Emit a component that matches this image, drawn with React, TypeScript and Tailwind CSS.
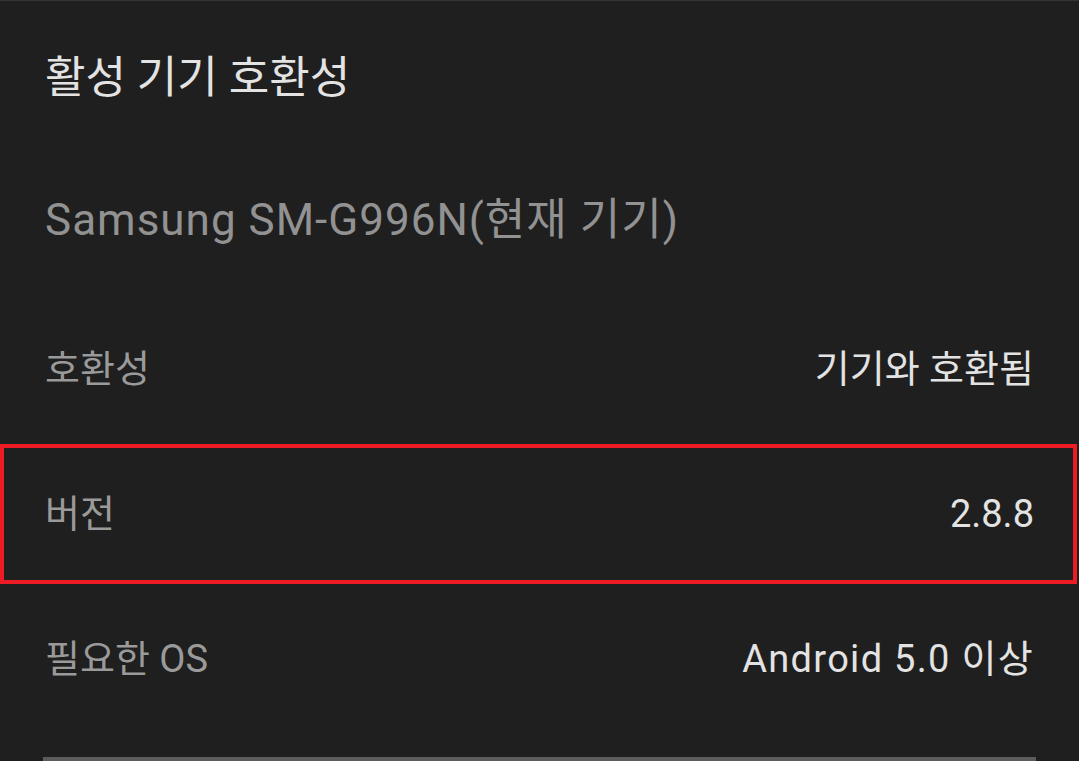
export default function App() {
  const rows = [
    { label: '호환성', value: '기기와 호환됨', track: '' },
    { label: '버전', value: '2.8.8', track: '', marked: true },
    { label: '필요한 OS', value: 'Android 5.0 이상', track: 'tracking-[1.3px]' },
  ];

  return (
    <div
      className="w-[1079px] h-[761px] overflow-hidden bg-[#1f1f1f] border-t border-[#343434]"
      style={{ fontFamily: 'Roboto, "Noto Sans CJK KR", sans-serif' }}
    >
      <div className="h-[154px] flex items-center px-[45px]">
        <h1 className="text-[44px] leading-none text-[#e3e3e3] font-normal">활성 기기 호환성</h1>
      </div>

      <div className="h-[130px] flex items-center px-[45px]">
        <p className="text-[44px] leading-none tracking-[1px] text-[#929292]">Samsung SM-G996N(현재 기기)</p>
      </div>

      <div className="mt-[11px]">
        {rows.map((row) => (
          <div key={row.label} className="relative h-[145px] flex items-center justify-between px-[45px]">
            <span className="text-[38px] leading-none text-[#9a9a9a]">{row.label}</span>
            <span className={`text-[38px] leading-none text-[#e3e3e3] ${row.track}`}>{row.value}</span>
            {row.marked && (
              <div className="absolute left-0 right-[2px] top-[3px] bottom-[2px] border-4 border-[#ed1c24]" />
            )}
          </div>
        ))}
      </div>

      <div className="mt-[26px] mx-[43px] h-[4px] bg-[#5c5c5c]" />
    </div>
  );
}
